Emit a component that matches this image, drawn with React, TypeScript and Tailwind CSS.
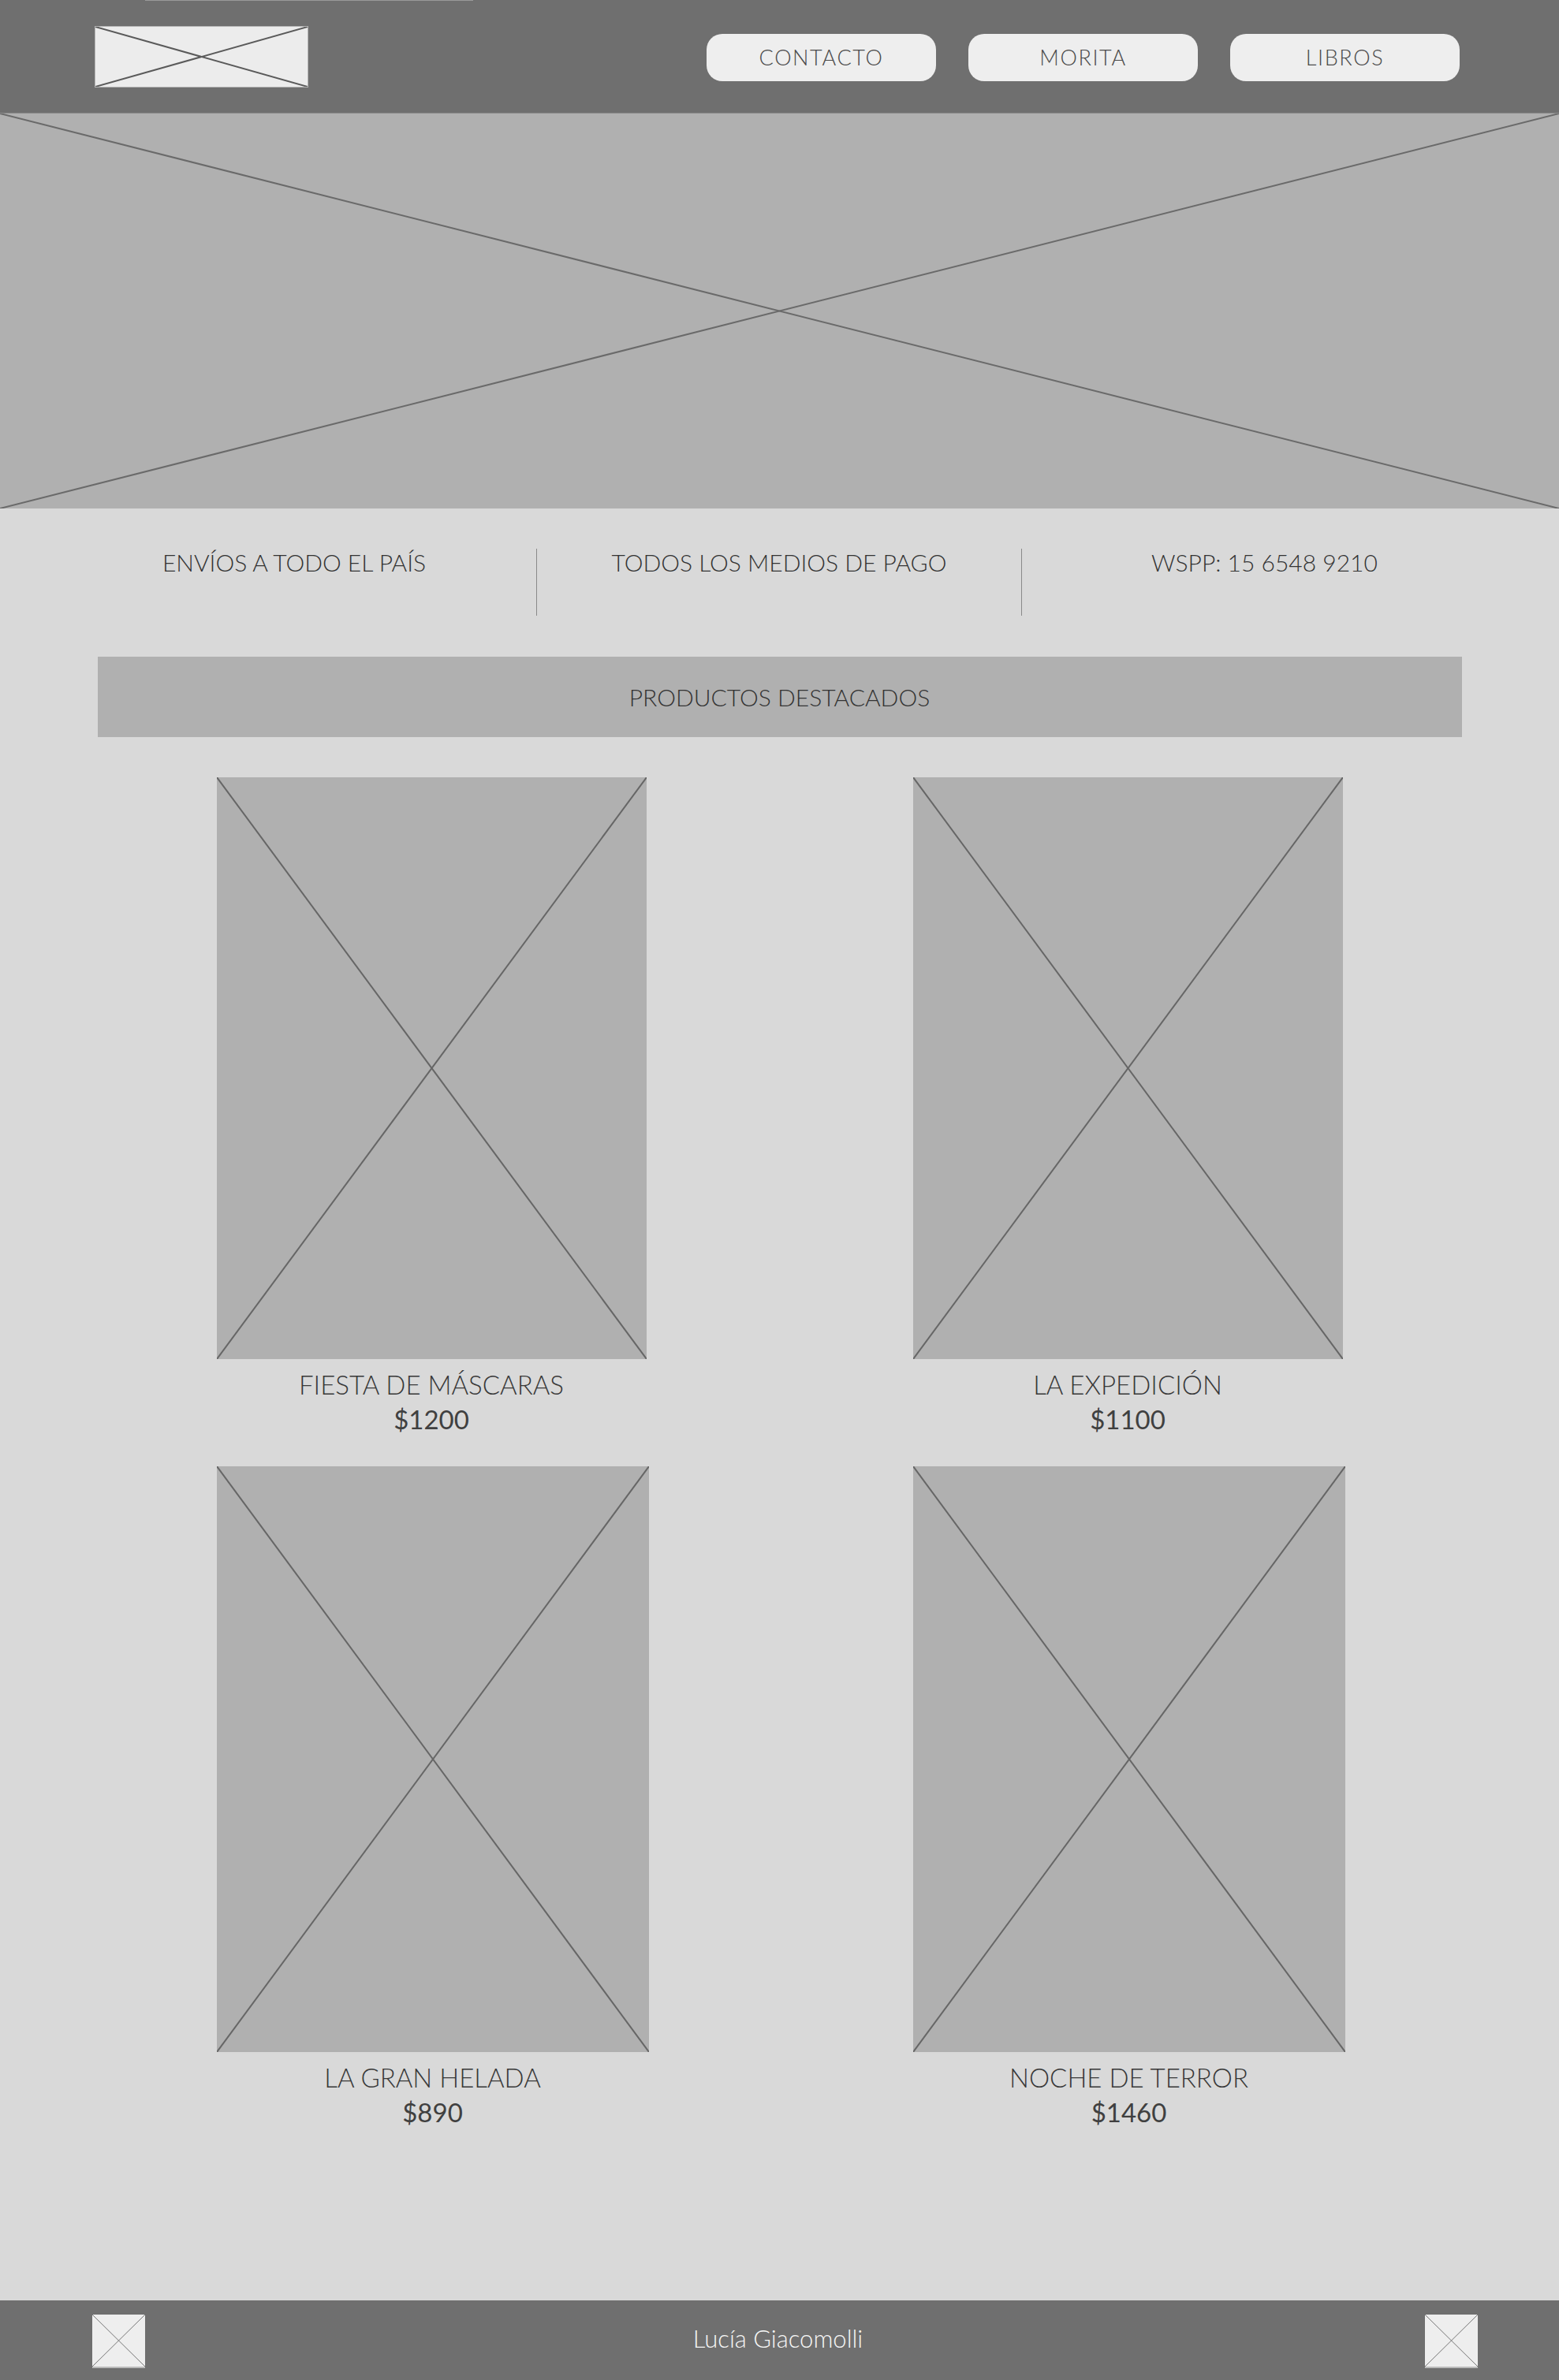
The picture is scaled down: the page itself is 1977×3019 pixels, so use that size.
import React from 'react';

const font = { fontFamily: 'Lato, "Open Sans", sans-serif' };

function Cross({ stroke = '#666666', width = 2 }: { stroke?: string; width?: number }) {
  return (
    <svg className="absolute inset-0 h-full w-full" preserveAspectRatio="none" viewBox="0 0 100 100">
      <line x1="0" y1="0" x2="100" y2="100" stroke={stroke} strokeWidth={width} vectorEffect="non-scaling-stroke" />
      <line x1="100" y1="0" x2="0" y2="100" stroke={stroke} strokeWidth={width} vectorEffect="non-scaling-stroke" />
    </svg>
  );
}

const navItems = ['CONTACTO', 'MORITA', 'LIBROS'];

const infoItems = ['ENVÍOS A TODO EL PAÍS', 'TODOS LOS MEDIOS DE PAGO', 'WSPP: 15 6548 9210'];

const rows = [
  {
    w: 'w-[545px]',
    h: 'h-[738px]',
    gap: 'gap-[338px]',
    items: [
      { title: 'FIESTA DE MÁSCARAS', price: '$1200' },
      { title: 'LA EXPEDICIÓN', price: '$1100' },
    ],
  },
  {
    w: 'w-[548px]',
    h: 'h-[743px]',
    gap: 'gap-[335px]',
    items: [
      { title: 'LA GRAN HELADA', price: '$890' },
      { title: 'NOCHE DE TERROR', price: '$1460' },
    ],
  },
];

export default function App() {
  return (
    <div className="w-[1977px] bg-[#d9d9d9]" style={font}>
      {/* header */}
      <header className="relative flex h-[144px] items-center justify-between border-b border-[#8a8a8a] bg-[#6f6f6f] pl-[120px] pr-[126px]">
        <div className="absolute left-[184px] top-0 h-[1px] w-[416px] bg-[#9a9a9a]" />
        <div className="relative h-[78px] w-[271px] border border-[#b5b5b5] bg-[#ececec]">
          <Cross stroke="#5a5a5a" />
        </div>
        <nav className="mt-[3px] flex gap-[41px]">
          {navItems.map((item) => (
            <button
              key={item}
              className="h-[60px] w-[291px] rounded-[20px] bg-[#eeeeee] text-[27px] font-light tracking-[0.06em] text-[#4a4a4a]"
            >
              {item}
            </button>
          ))}
        </nav>
      </header>

      {/* hero */}
      <div className="relative h-[501px] bg-[#b0b0b0]">
        <Cross stroke="#6a6a6a" />
      </div>

      {/* info */}
      <div className="mx-auto grid w-[1845px] grid-cols-3 pt-[51px]">
        {infoItems.map((item, i) => (
          <div
            key={item}
            className={`flex h-[85px] justify-center text-[30px] font-light leading-[34px] text-[#333333] ${i < 2 ? 'border-r border-[#8a8a8a]' : ''}`}
          >
            {item}
          </div>
        ))}
      </div>

      {/* products */}
      <div className="mx-auto mt-[52px] w-[1730px] pb-[219px]">
        <div className="flex h-[102px] items-center justify-center bg-[#b0b0b0] text-[30px] font-light text-[#333333]">
          PRODUCTOS DESTACADOS
        </div>

        <div className="mt-[51px] flex flex-col gap-[40px] pl-[151px]">
          {rows.map((row, r) => (
            <div key={r} className={`flex ${row.gap}`}>
              {row.items.map((p) => (
                <div key={p.title} className={`flex flex-col items-center ${row.w}`}>
                  <div className={`relative w-full ${row.h} bg-[#b0b0b0]`}>
                    <Cross stroke="#666666" />
                  </div>
                  <div className="mt-[12px] text-[33px] font-light leading-[40px] text-[#383838]">{p.title}</div>
                  <div className="mt-[4px] text-[33px] leading-[40px] text-[#404040]">{p.price}</div>
                </div>
              ))}
            </div>
          ))}
        </div>
      </div>

      {/* footer */}
      <footer className="flex h-[104px] items-center justify-between bg-[#6f6f6f] pl-[117px] pr-[103px]">
        <div className="relative h-[68px] w-[67px] border-b-2 border-[#bbbbbb] bg-[#eeeeee]">
          <Cross stroke="#777777" width={1} />
        </div>
        <span className="mb-[8px] mr-[18px] text-[31px] font-light text-[#f6f6f6]">Lucía Giacomolli</span>
        <div className="relative h-[68px] w-[67px] border-b-2 border-[#bbbbbb] bg-[#eeeeee]">
          <Cross stroke="#777777" width={1} />
        </div>
      </footer>
    </div>
  );
}
